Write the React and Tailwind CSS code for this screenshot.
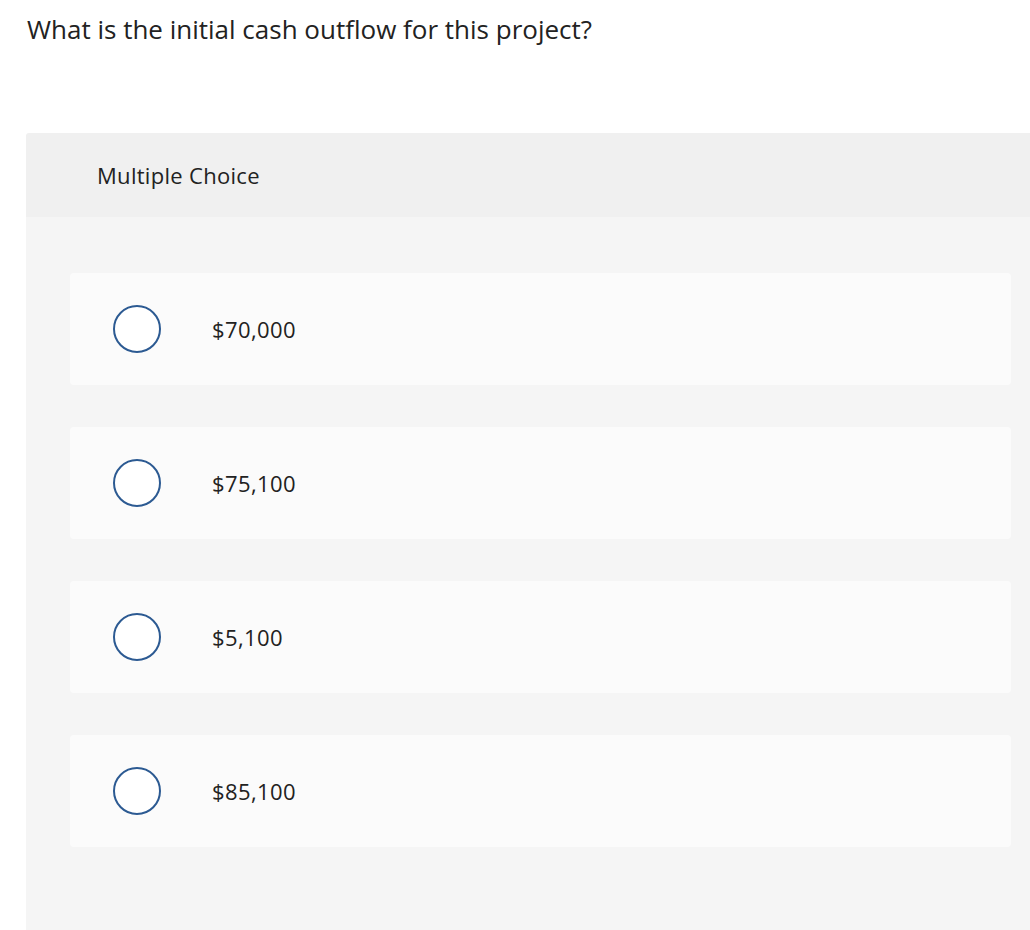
import React from 'react';

const choices = ['$70,000', '$75,100', '$5,100', '$85,100'];

const Choice = ({ label }) => (
  <label className="flex items-center h-[112px] rounded-[4px] bg-[#fbfbfb] cursor-pointer">
    <span className="ml-[43px] w-12 h-12 rounded-full border-2 border-[#2c5a92] bg-white shrink-0" />
    <span className="ml-[51px] text-[22px] text-[#222] tracking-[0.4px]">{label}</span>
  </label>
);

export default function App() {
  return (
    <div className="min-h-[930px] bg-white font-['Open_Sans','Liberation_Sans',sans-serif] overflow-hidden">
      <h1 className="pl-[27px] pt-[10px] text-[26px] leading-[38px] text-[#222] font-normal">
        What is the initial cash outflow for this project?
      </h1>

      <div className="ml-[26px] mt-[85px] -mr-4 rounded-tl-[3px] overflow-hidden">
        <div className="h-[84px] bg-[#f0f0f0] flex items-center pl-[71px]">
          <span className="text-[22px] text-[#222] tracking-[0.3px]">Multiple Choice</span>
        </div>
        <div className="bg-[#f5f5f5] pt-[56px] pb-[90px] pl-[44px] pr-[35px] flex flex-col gap-[42px]">
          {choices.map(c => (
            <Choice key={c} label={c} />
          ))}
        </div>
      </div>
    </div>
  );
}
